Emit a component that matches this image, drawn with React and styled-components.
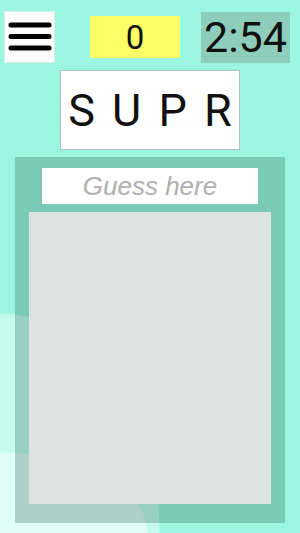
import React from 'react'
import styled, { createGlobalStyle } from 'styled-components'

const GlobalStyle = createGlobalStyle`
  html, body {
    margin: 0;
    padding: 0;
    height: 100%;
  }
  body {
    font-family: Roboto, 'Liberation Sans', Arial, sans-serif;
    background-color: #9af6e0;
  }
  #root {
    height: 100%;
  }
`

const Screen = styled.div`
  width: 300px;
  height: 533px;
  box-sizing: border-box;
  overflow: hidden;
  display: flex;
  flex-direction: column;
  align-items: center;
  background-color: #9af6e0;
  background-image:
    radial-gradient(ellipse 148px 81px at 0 533px, #e0fdf5 99%, transparent 100%),
    radial-gradient(ellipse 160px 220px at 0 533px, #c4fbee 99.5%, transparent 100%);
  background-repeat: no-repeat;
`

const TopBar = styled.div`
  width: 100%;
  box-sizing: border-box;
  padding: 11px 0 0 4px;
  display: flex;
  align-items: center;
`

const MenuButton = styled.button`
  width: 51px;
  height: 52px;
  padding: 0;
  border: 1px solid #e4ece9;
  background: #fdfdfd;
  display: flex;
  align-items: center;
  justify-content: center;
  cursor: pointer;
`

const Score = styled.div`
  margin-left: 35px;
  width: 90px;
  height: 42px;
  background: #fdfd66;
  display: flex;
  align-items: center;
  justify-content: center;
  font-size: 33px;
  color: #111;
`

const Timer = styled.div`
  margin-left: 21px;
  width: 89px;
  height: 51px;
  background: #8ecdb9;
  display: flex;
  align-items: center;
  justify-content: center;
  font-size: 43px;
  color: #111;
`

const Word = styled.div`
  margin-top: 7px;
  width: 180px;
  height: 80px;
  box-sizing: border-box;
  border: 1px solid #a9c4be;
  background: #fff;
  display: flex;
  align-items: center;
  justify-content: center;
  font-size: 45px;
  letter-spacing: 3px;
  text-indent: 3px;
  color: #111;
  white-space: pre;
`

const Panel = styled.div`
  margin-top: 7px;
  width: 270px;
  height: 366px;
  box-sizing: border-box;
  padding: 11px 14px 19px;
  background: rgba(28, 80, 70, 0.26);
  display: flex;
  flex-direction: column;
  align-items: center;
  gap: 8px;
`

const GuessInput = styled.input`
  width: 216px;
  height: 36px;
  box-sizing: border-box;
  border: none;
  outline: none;
  background: #fff;
  text-align: center;
  font-family: 'Liberation Sans', Arial, sans-serif;
  font-size: 26px;
  font-style: italic;
  color: #333;
  padding: 0;

  &::placeholder {
    color: #b0b0b0;
  }
`

const Guesses = styled.div`
  width: 242px;
  flex: 1;
  background: #dde3e0;
`

const BarsIcon = () => (
  <svg width="46" height="34" viewBox="0 0 46 34">
    <g stroke="#000" strokeWidth="5" strokeLinecap="round">
      <line x1="4" y1="5" x2="42" y2="5" />
      <line x1="4" y1="16.5" x2="42" y2="16.5" />
      <line x1="4" y1="28" x2="42" y2="28" />
    </g>
  </svg>
)

export default function App () {
  return (
    <>
      <GlobalStyle />
      <Screen>
        <TopBar>
          <MenuButton aria-label="Menu">
            <BarsIcon />
          </MenuButton>
          <Score>0</Score>
          <Timer>2:54</Timer>
        </TopBar>
        <Word>S U P R</Word>
        <Panel>
          <GuessInput placeholder="Guess here" />
          <Guesses />
        </Panel>
      </Screen>
    </>
  )
}
